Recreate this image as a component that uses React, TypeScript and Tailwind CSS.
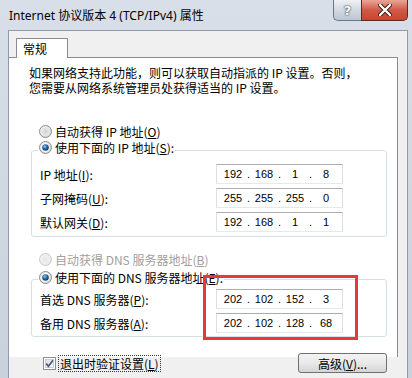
import { Fragment } from "react";

function Radio({ checked, disabled, id }: { checked?: boolean; disabled?: boolean; id: string }) {
  return (
    <svg width="13" height="13" viewBox="0 0 13 13" className="shrink-0">
      <defs>
        <linearGradient id={`${id}-o`} x1="0" y1="0" x2="1" y2="1">
          <stop offset="0" stopColor={disabled ? "#f4f4f4" : "#f6f6f6"} />
          <stop offset="1" stopColor={disabled ? "#e6e6e6" : "#d2d4d6"} />
        </linearGradient>
        <radialGradient id={`${id}-d`} cx="0.4" cy="0.35" r="0.7">
          <stop offset="0" stopColor="#8fd0f5" />
          <stop offset="0.45" stopColor="#2a6db3" />
          <stop offset="1" stopColor="#0e2f55" />
        </radialGradient>
        <radialGradient id={`${id}-u`} cx="0.5" cy="0.5" r="0.6">
          <stop offset="0" stopColor={disabled ? "#e4e4e4" : "#cfd0d1"} />
          <stop offset="1" stopColor={disabled ? "#f2f2f2" : "#eeeeee"} />
        </radialGradient>
      </defs>
      <circle cx="6.5" cy="6.5" r="6" fill={`url(#${id}-o)`} stroke={disabled ? "#c9c9c9" : "#8a8c8e"} />
      <circle cx="6.5" cy="6.5" r="4.2" fill={checked ? "#ffffff" : `url(#${id}-u)`} />
      {checked && <circle cx="6.5" cy="6.5" r="3.3" fill={`url(#${id}-d)`} />}
    </svg>
  );
}

function IpBox({ parts }: { parts: string[] }) {
  return (
    <div className="flex h-[20px] w-[127px] items-center border border-[#abadb3] border-x-[#dbdfe6] border-b-[#e3e9ef] bg-white pl-[4px] font-['Liberation_Sans',sans-serif] text-[11px] leading-[18px] text-black">
      {parts.map((p, i) => (
        <Fragment key={i}>
          {i > 0 && <span className="w-[7px] text-center">.</span>}
          <span className="w-[24px] text-center">{p}</span>
        </Fragment>
      ))}
    </div>
  );
}

function Row({ label, parts }: { label: React.ReactNode; parts: string[] }) {
  return (
    <div className="flex h-[20px] items-center pl-[8px]">
      <div className="w-[176px] leading-[15px]">{label}</div>
      <IpBox parts={parts} />
    </div>
  );
}

export default function App() {
  return (
    <div className="relative h-[378px] w-[412px] overflow-hidden bg-gradient-to-b from-[#d9dfe8] to-[#c9d1dc] font-['Noto_Sans_CJK_SC',sans-serif] text-[12px] text-black">
      {/* Title bar */}
      <div className="flex h-[30px] items-start justify-between">
        <div className="pl-[9px] pt-[7px] font-['Noto_Sans','Noto_Sans_CJK_SC',sans-serif] text-[12px] leading-[17px] text-black">
          Internet 协议版本 4 (TCP/IPv4) 属性
        </div>
        <div className="mr-[4px] flex h-[21px]">
          <div className="flex w-[28px] items-center justify-center rounded-bl-[5px] border border-t-0 border-r-0 border-[#6b7686] bg-gradient-to-b from-[#eef1f5] via-[#d3d9e2] to-[#bcc5d2]">
            <span className="font-['DejaVu_Sans',sans-serif] text-[13px] font-bold leading-none text-white [text-shadow:0_0_1px_#2b3440,0_0_2px_#2b3440]">?</span>
          </div>
          <div className="flex w-[47px] items-center justify-center rounded-br-[5px] border border-t-0 border-[#5b2a24] bg-gradient-to-b from-[#e9a597] via-[#cf5a47] to-[#c8442c]">
            <svg width="14" height="12" viewBox="0 0 14 12">
              <path d="M2 1 L12 11 M12 1 L2 11" stroke="#3b1a14" strokeWidth="4.2" strokeLinecap="round" />
              <path d="M2 1 L12 11 M12 1 L2 11" stroke="#ffffff" strokeWidth="2.4" strokeLinecap="round" />
            </svg>
          </div>
        </div>
      </div>

      {/* Client area */}
      <div className="ml-[8px] mr-[4px] h-[348px] border-x border-t border-[#8f9bab] bg-[#f0f0f0]">
        <div className="pl-[7px] pt-[7px]">
          <div className="relative z-10 -mb-px h-[20px] w-[52px] border border-b-0 border-[#898c95] bg-white pl-[6px] leading-[19px]">
            常规
          </div>
        </div>
        <div className="h-[300px] w-[389px] border-r border-t border-[#898c95] bg-white">
          <div className="pl-[20px] pt-[7px] leading-[15px]">
            <div>如果网络支持此功能，则可以获取自动指派的 IP 设置。否则，</div>
            <div>您需要从网络系统管理员处获得适当的 IP 设置。</div>
          </div>

          <div className="ml-[30px] mt-[29px] flex h-[15px] items-center gap-[3px] leading-[15px]">
            <Radio id="r1" />
            <span>
              自动获得 IP 地址(<u>O</u>)
            </span>
          </div>

          <fieldset className="ml-[22px] mt-[1px] w-[356px] rounded-[3px] border border-[#d5dfe5] pb-[4px]">
            <legend className="ml-[6px] h-[21px] pl-[1px] pr-[1px]">
              <div className="flex h-[15px] items-center gap-[3px] leading-[15px]">
                <Radio id="r2" checked />
                <span>
                  使用下面的 IP 地址(<u>S</u>):
                </span>
              </div>
            </legend>
            <div className="flex flex-col gap-[4px] pt-[3px]">
              <Row label={<>IP 地址(<u>I</u>):</>} parts={["192", "168", "1", "8"]} />
              <Row label={<>子网掩码(<u>U</u>):</>} parts={["255", "255", "255", "0"]} />
              <Row label={<>默认网关(<u>D</u>):</>} parts={["192", "168", "1", "1"]} />
            </div>
          </fieldset>

          <div className="ml-[30px] mt-[15px] flex h-[15px] items-center gap-[3px] leading-[15px] text-[#a0a0a0]">
            <Radio id="r3" disabled />
            <span>
              自动获得 DNS 服务器地址(<u>B</u>)
            </span>
          </div>

          <fieldset className="ml-[22px] mt-[3px] w-[356px] rounded-[3px] border border-[#d5dfe5] pb-[3px]">
            <legend className="ml-[6px] h-[19px] pl-[1px] pr-[1px]">
              <div className="flex h-[15px] items-center gap-[3px] leading-[15px]">
                <Radio id="r4" checked />
                <span>
                  使用下面的 DNS 服务器地址(<u>E</u>):
                </span>
              </div>
            </legend>
            <div className="flex flex-col gap-[4px]">
              <Row label={<>首选 DNS 服务器(<u>P</u>):</>} parts={["202", "102", "152", "3"]} />
              <Row label={<>备用 DNS 服务器(<u>A</u>):</>} parts={["202", "102", "128", "68"]} />
            </div>
          </fieldset>

          <div className="mt-[16px] flex items-center justify-between pl-[34px] pr-[10px]">
            <div className="flex items-center gap-[2px]">
              <svg width="13" height="13" viewBox="0 0 13 13" className="shrink-0">
                <defs>
                  <linearGradient id="cb" x1="0" y1="0" x2="1" y2="1">
                    <stop offset="0" stopColor="#dcdcdc" />
                    <stop offset="1" stopColor="#fbfbfb" />
                  </linearGradient>
                </defs>
                <rect x="0.5" y="0.5" width="12" height="12" fill="#ffffff" stroke="#8e8f8f" />
                <rect x="2.5" y="2.5" width="8" height="8" fill="url(#cb)" stroke="#c4c4c4" strokeWidth="0.8" />
                <path d="M3.2 6.6 L5.4 9.2 L10 3.2" fill="none" stroke="#4a5f8e" strokeWidth="1.8" />
              </svg>
              <span className="border border-dotted border-[#333] px-[1px] leading-[15px]">
                退出时验证设置(<u>L</u>)
              </span>
            </div>
            <div className="flex h-[20px] w-[89px] items-center justify-center rounded-[3px] border border-[#707070] bg-gradient-to-b from-[#f4f4f4] via-[#e9e9e9] to-[#d4d4d4] leading-[15px]">
              高级(<u>V</u>)...
            </div>
          </div>
        </div>
      </div>

      {/* annotation */}
      <div className="absolute left-[203px] top-[275px] h-[65px] w-[155px] border-[3px] border-[#e8383c]" />
    </div>
  );
}
